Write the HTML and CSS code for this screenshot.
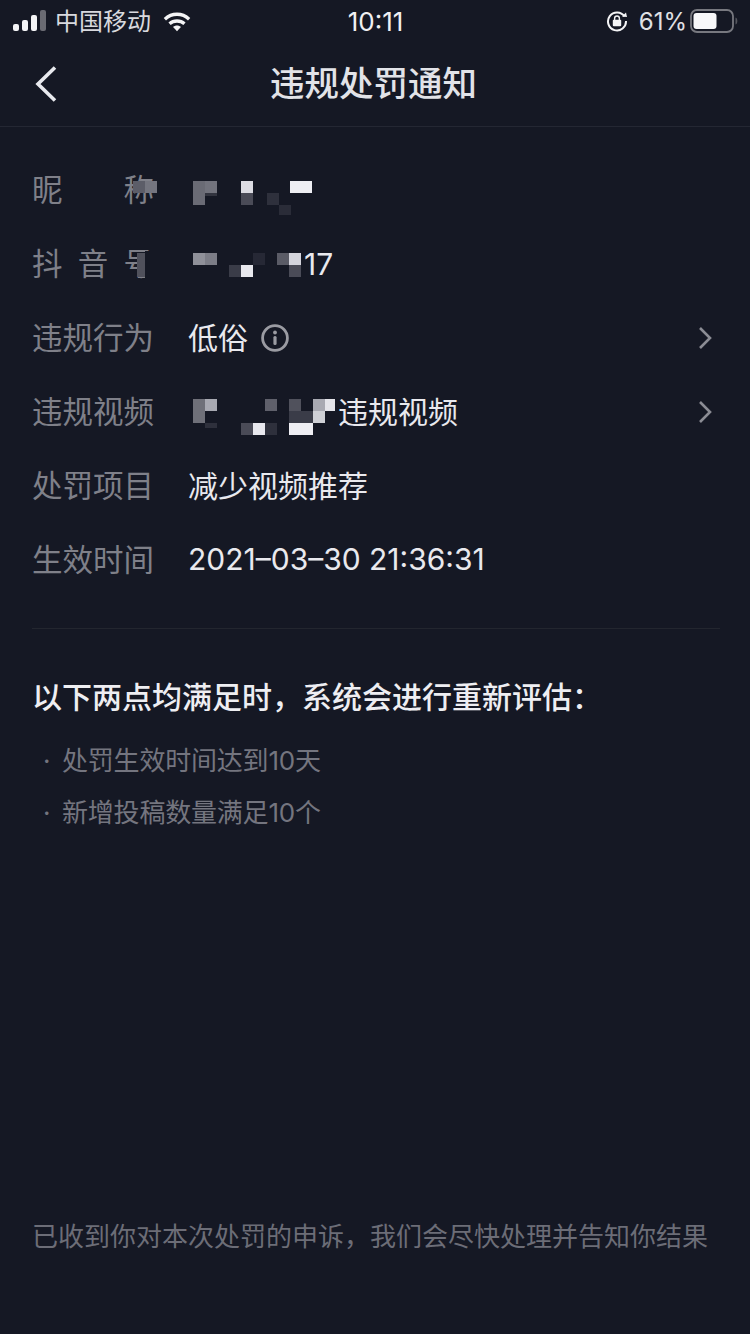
FILE: index.html

```html
<html>
<head>
    <meta charset="utf-8">
    <title>违规处罚通知</title>
    <link rel="stylesheet" href="styles.css">
</head>
<body>
<div class="page">
    <div class="status">
        <div class="status-side">
            <svg class="signal" width="34" height="22" viewBox="0 0 34 22">
                <rect x="0" y="14" width="6" height="7" rx="2" fill="#f4f4f6"/>
                <rect x="9" y="10" width="6" height="11" rx="2" fill="#f4f4f6"/>
                <rect x="18" y="5" width="6" height="16" rx="2" fill="#f4f4f6"/>
                <rect x="27" y="0" width="6" height="21" rx="2" fill="#6a6b73"/>
            </svg>
            <span class="carrier">中国移动</span>
            <svg class="wifi" width="28" height="21" viewBox="0 0 30 22">
                <path d="M2 8.500C9.500 1.500 20.500 1.500 28 8.500" fill="none" stroke="#f4f4f6" stroke-width="3.600"/>
                <path d="M7 13.500C11.500 9.500 18.500 9.500 23 13.500" fill="none" stroke="#f4f4f6" stroke-width="3.600"/>
                <path d="M10.800 17L15 21.500 19.200 17C16.800 14.800 13.200 14.800 10.800 17Z" fill="#f4f4f6"/>
            </svg>
        </div>
        <span class="clock">10:11</span>
        <div class="status-side status-right">
            <svg class="lock" width="22" height="22" viewBox="0 0 22 22">
                <path d="M18.500 6.500A9 9 0 1 0 20 11" fill="none" stroke="#f4f4f6" stroke-width="2"/>
                <path d="M16 6.500L21 7 20 2.500Z" fill="#f4f4f6"/>
                <rect x="6.800" y="9.800" width="8.400" height="6.400" rx="1" fill="#f4f4f6"/>
                <path d="M8.600 10V8.400a2.400 2.400 0 0 1 4.800 0V10" fill="none" stroke="#f4f4f6" stroke-width="1.400"/>
            </svg>
            <span class="percent">61%</span>
            <svg class="battery" width="48" height="24" viewBox="0 0 48 24">
                <rect x="1" y="1" width="42" height="22" rx="6" fill="none" stroke="#77787f" stroke-width="1.800"/>
                <rect x="3.500" y="4" width="23" height="16" rx="3" fill="#f8f8fa"/>
                <path d="M45.500 8.500c1.400.5 1.800 1.500 1.800 3.500s-.4 3-1.800 3.500z" fill="#55565e"/>
            </svg>
        </div>
    </div>

    <div class="nav">
        <svg class="back" width="24" height="38" viewBox="0 0 24 38">
            <path d="M21 2.500L4 19l17 16.500" fill="none" stroke="#e8e9ee" stroke-width="3.600"/>
        </svg>
        <h1 class="nav-title">违规处罚通知</h1>
    </div>

    <div class="info">
        <div class="row">
            <span class="label">昵称</span>
            <span class="value"></span>
            <svg class="mosaic" width="750" height="74" viewBox="0 0 750 74">
                <rect x="133" y="28" width="12" height="12" fill="#5c5d68"/>
                <rect x="145" y="28" width="12" height="12" fill="#74757f"/>
                <rect x="193" y="28" width="12" height="12" fill="#6a6b75"/>
                <rect x="205" y="28" width="12" height="12" fill="#72737d"/>
                <rect x="193" y="40" width="12" height="12" fill="#6a6b75"/>
                <rect x="205" y="40" width="12" height="3" fill="#32343f"/>
                <rect x="241" y="28" width="12" height="12" fill="#dcdce3"/>
                <rect x="241" y="40" width="12" height="12" fill="#4a4b57"/>
                <rect x="267" y="40" width="12" height="12" fill="#2e303c"/>
                <rect x="279" y="52" width="12" height="10" fill="#2a2c38"/>
                <rect x="290" y="28" width="22" height="12" fill="#eeeef3"/>
            </svg>
        </div>
        <div class="row">
            <span class="label">抖音号</span>
            <span class="value value-id"><span class="masked masked-id"></span>17</span>
            <svg class="mosaic" width="750" height="74" viewBox="0 0 750 74">
                <rect x="137" y="26" width="8" height="24" fill="#50515c"/>
                <rect x="145" y="24" width="14" height="28" fill="#151824"/>
                <rect x="193" y="26" width="12" height="12" fill="#8f9099"/>
                <rect x="205" y="26" width="12" height="12" fill="#7c7d87"/>
                <rect x="229" y="38" width="12" height="12" fill="#3a3c48"/>
                <rect x="241" y="38" width="12" height="12" fill="#e8e8ee"/>
                <rect x="253" y="26" width="12" height="12" fill="#262835"/>
                <rect x="277" y="26" width="12" height="12" fill="#5a5b66"/>
                <rect x="289" y="26" width="12" height="12" fill="#d4d4dc"/>
                <rect x="289" y="38" width="12" height="12" fill="#4a4b57"/>
            </svg>
        </div>
        <div class="row">
            <span class="label">违规行为</span>
            <span class="value">低俗
                <svg class="tip" width="28" height="28" viewBox="0 0 28 28">
                    <circle cx="14" cy="14" r="12.400" fill="none" stroke="#9a9ba2" stroke-width="2.800"/>
                    <rect x="12.400" y="12" width="3.200" height="9" rx="1.500" fill="#9a9ba2"/>
                    <circle cx="14" cy="8.500" r="1.900" fill="#9a9ba2"/>
                </svg>
            </span>
            <svg class="arrow" width="14" height="24" viewBox="0 0 14 24">
                <path d="M2 2l10 10L2 22" fill="none" stroke="#8b8c94" stroke-width="2.600"/>
            </svg>
        </div>
        <div class="row">
            <span class="label">违规视频</span>
            <span class="value"><span class="masked masked-video"></span>违规视频</span>
            <svg class="arrow" width="14" height="24" viewBox="0 0 14 24">
                <path d="M2 2l10 10L2 22" fill="none" stroke="#8b8c94" stroke-width="2.600"/>
            </svg>
            <svg class="mosaic" width="750" height="74" viewBox="0 0 750 74">
                <rect x="193" y="24" width="12" height="24" fill="#6f7079"/>
                <rect x="205" y="24" width="12" height="12" fill="#a8a9b2"/>
                <rect x="205" y="48" width="12" height="5" fill="#2e303c"/>
                <rect x="241" y="48" width="12" height="12" fill="#4a4b57"/>
                <rect x="253" y="48" width="12" height="12" fill="#e8e8ee"/>
                <rect x="265" y="24" width="12" height="12" fill="#5f606b"/>
                <rect x="265" y="48" width="12" height="12" fill="#2e303c"/>
                <rect x="289" y="24" width="12" height="12" fill="#50515c"/>
                <rect x="289" y="48" width="24" height="12" fill="#eeeef3"/>
                <rect x="289" y="36" width="24" height="12" fill="#3a3c48"/>
                <rect x="313" y="24" width="12" height="12" fill="#a8a9b2"/>
                <rect x="325" y="24" width="10" height="12" fill="#e4e4ea"/>
                <rect x="313" y="36" width="12" height="12" fill="#cfd0d6"/>
            </svg>
        </div>
        <div class="row">
            <span class="label">处罚项目</span>
            <span class="value">减少视频推荐</span>
        </div>
        <div class="row">
            <span class="label">生效时间</span>
            <span class="value value-date">2021–03–30 21:36:31</span>
        </div>
    </div>

    <div class="rules">
        <h2 class="rules-title">以下两点均满足时，系统会进行重新评估：</h2>
        <ul class="rules-list">
            <li>处罚生效时间达到10天</li>
            <li>新增投稿数量满足10个</li>
        </ul>
    </div>

    <p class="foot">已收到你对本次处罚的申诉，我们会尽快处理并告知你结果</p>
</div>
</body>
</html>
```

FILE: styles.css

```css
*{
    margin: 0px;
    padding: 0px;
    box-sizing: border-box;
}
body{
    background-color: #151824;
    font-family: Inter, "Noto Sans CJK SC", sans-serif;
    color: #e9e9ee;
}
.page{
    width: 750px;
    height: 1334px;
    display: flex;
    flex-direction: column;
    overflow: hidden;
}
/* status bar */
.status{
    height: 42px;
    padding: 0 12px 0 13px;
    display: flex;
    align-items: center;
    justify-content: space-between;
    color: #f0f0f3;
}
.status-side{
    width: 280px;
    display: flex;
    align-items: center;
}
.status-right{
    justify-content: flex-end;
}
.carrier{
    font-size: 24px;
    margin-left: 8px;
    padding-bottom: 3px;
    color: #d8d9de;
}
.wifi{
    margin-left: 12px;
}
.clock{
    font-size: 26px;
}
.percent{
    font-size: 24px;
    margin: 0 3px 0 11px;
    color: #e0e1e5;
}
/* title bar */
.nav{
    height: 85px;
    position: relative;
    display: flex;
    align-items: center;
    justify-content: center;
    border-bottom: 1px solid #242733;
}
.back{
    position: absolute;
    left: 34px;
    top: 23px;
}
.nav-title{
    font-size: 34.5px;
    font-weight: 500;
    color: #e2e3e8;
    padding: 0 3px 6px 0;
}
/* info rows */
.info{
    padding-top: 26px;
    border-bottom: 1px solid #23262f;
    margin: 0 30px 0 32px;
    padding-bottom: 31px;
}
.row{
    height: 74px;
    display: flex;
    align-items: center;
    position: relative;
}
.label{
    width: 122px;
    margin-right: 34px;
    font-size: 30.5px;
    color: #7f8089;
    text-align: justify;
    text-align-last: justify;
    padding-bottom: 4px;
}
.value{
    flex: 1;
    font-size: 30px;
    color: #e9e9ee;
    display: flex;
    align-items: center;
    padding-bottom: 4px;
}
.value-id{
    padding-bottom: 0px;
}
.value-date{
    padding-bottom: 2px;
}
.masked{
    display: inline-block;
}
.masked-id{
    width: 116px;
}
.masked-video{
    width: 150px;
}
.tip{
    margin: 4px 0 0 13px;
}
.arrow{
    margin-right: 8px;
}
.mosaic{
    position: absolute;
    left: -32px;
    top: 0px;
}
/* rules */
.rules{
    padding: 48px 32px 0;
}
.rules-title{
    font-size: 30px;
    font-weight: 500;
    line-height: 40px;
    color: #eeeef2;
}
.rules-list{
    list-style: none;
    margin-top: 18px;
}
.rules-list li{
    height: 52px;
    line-height: 52px;
    font-size: 26px;
    letter-spacing: -0.2px;
    color: #74757f;
    padding-left: 30px;
    position: relative;
}
.rules-list li:before{
    content: "·";
    position: absolute;
    left: 11px;
    top: 0px;
}
.foot{
    margin-top: auto;
    padding: 0 32px 78px;
    font-size: 26px;
    line-height: 38px;
    color: #6c6d77;
    white-space: nowrap;
}
```
